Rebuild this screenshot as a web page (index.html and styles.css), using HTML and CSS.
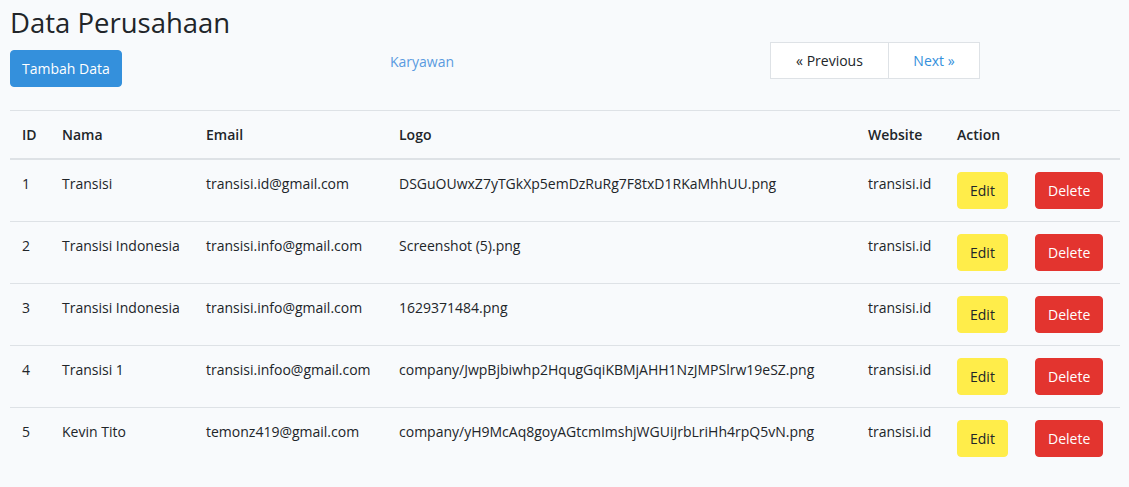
FILE: index.html
```html
<!DOCTYPE html>
<html lang="id">
<head>
<meta charset="utf-8">
<title>Data Perusahaan</title>
<link rel="stylesheet" href="styles.css">
</head>
<body>
<div class="page">
  <h1 class="title">Data Perusahaan</h1>
  <div class="toolbar">
    <div class="tool-left"><a class="btn btn-primary" href="#">Tambah Data</a></div>
    <div class="tool-mid"><a class="link" href="#">Karyawan</a></div>
    <div class="tool-right">
      <nav class="pager">
        <span class="page-item disabled">« Previous</span>
        <a class="page-item" href="#">Next »</a>
      </nav>
    </div>
  </div>
  <table class="table">
    <colgroup>
      <col class="c-id"><col class="c-nama"><col class="c-email"><col class="c-logo"><col class="c-web"><col class="c-edit"><col class="c-del">
    </colgroup>
    <thead>
      <tr><th>ID</th><th>Nama</th><th>Email</th><th>Logo</th><th>Website</th><th colspan="2">Action</th></tr>
    </thead>
    <tbody>
      <tr><td>1</td><td>Transisi</td><td>transisi.id@gmail.com</td><td>DSGuOUwxZ7yTGkXp5emDzRuRg7F8txD1RKaMhhUU.png</td><td>transisi.id</td><td><a class="btn btn-warning" href="#">Edit</a></td><td class="td-del"><a class="btn btn-danger" href="#">Delete</a></td></tr>
      <tr><td>2</td><td>Transisi Indonesia</td><td>transisi.info@gmail.com</td><td>Screenshot (5).png</td><td>transisi.id</td><td><a class="btn btn-warning" href="#">Edit</a></td><td class="td-del"><a class="btn btn-danger" href="#">Delete</a></td></tr>
      <tr><td>3</td><td>Transisi Indonesia</td><td>transisi.info@gmail.com</td><td>1629371484.png</td><td>transisi.id</td><td><a class="btn btn-warning" href="#">Edit</a></td><td class="td-del"><a class="btn btn-danger" href="#">Delete</a></td></tr>
      <tr><td>4</td><td>Transisi 1</td><td>transisi.infoo@gmail.com</td><td>company/JwpBjbiwhp2HqugGqiKBMjAHH1NzJMPSlrw19eSZ.png</td><td>transisi.id</td><td><a class="btn btn-warning" href="#">Edit</a></td><td class="td-del"><a class="btn btn-danger" href="#">Delete</a></td></tr>
      <tr><td>5</td><td>Kevin Tito</td><td>temonz419@gmail.com</td><td>company/yH9McAq8goyAGtcmImshjWGUiJrbLriHh4rpQ5vN.png</td><td>transisi.id</td><td><a class="btn btn-warning" href="#">Edit</a></td><td class="td-del"><a class="btn btn-danger" href="#">Delete</a></td></tr>
    </tbody>
  </table>
</div>
</body>
</html>
```
FILE: styles.css
```css
* { box-sizing: border-box; }
html, body { margin: 0; padding: 0; }
body {
  background: #f8fafc;
  color: #212529;
  font-family: "Open Sans", "Noto Sans", sans-serif;
  font-size: 14px;
  line-height: 23px;
}
.page { padding: 0 9px 0 10px; }
.title {
  margin: 0;
  padding-top: 5px;
  font-size: 27.5px;
  line-height: 36px;
  font-weight: 400;
  color: #212529;
}
.toolbar {
  display: grid;
  grid-template-columns: 380px 380px 1fr;
  height: 45px;
  margin-top: 1px;
  margin-bottom: 23px;
}
.tool-left { padding-top: 8px; }
.tool-mid { padding-top: 8px; }
.btn {
  display: inline-block;
  padding: 6px 11px;
  border: 1px solid transparent;
  border-radius: 4px;
  font-size: 14px;
  line-height: 23px;
  text-decoration: none;
  text-align: center;
}
.btn-primary { background: #3490dc; border-color: #3490dc; color: #fff; }
.btn-warning { background: #ffed4a; border-color: #ffed4a; color: #212529; padding: 6px 12px; }
.btn-danger { background: #e3342f; border-color: #e3342f; color: #fff; padding: 6px 12px; }
.link { color: #5a9ae0; text-decoration: none; }
.pager { display: flex; }
.page-item {
  display: block;
  height: 37px;
  padding: 6px 12px;
  border: 1px solid #dee2e6;
  background: #fff;
  color: #3490dc;
  text-decoration: none;
  line-height: 23px;
  text-align: center;
}
.page-item.disabled { color: #212529; width: 119px; }
.page-item + .page-item { margin-left: -1px; width: 92px; }
.table {
  width: 1110px;
  border-collapse: collapse;
  table-layout: fixed;
}
.c-id { width: 40px; }
.c-nama { width: 144px; }
.c-email { width: 193px; }
.c-logo { width: 469px; }
.c-web { width: 89px; }
.c-edit { width: 78px; }
.c-del { width: 97px; }
.table th, .table td {
  padding: 12px;
  text-align: left;
  vertical-align: top;
  border-top: 1px solid #dee2e6;
  white-space: nowrap;
}
.table th { font-weight: 600; }
.table thead th { border-bottom: 2px solid #dee2e6; }
.table tbody tr:first-child td { border-top: 0; }
.td-del { text-align: right; padding-right: 15px; }
```
